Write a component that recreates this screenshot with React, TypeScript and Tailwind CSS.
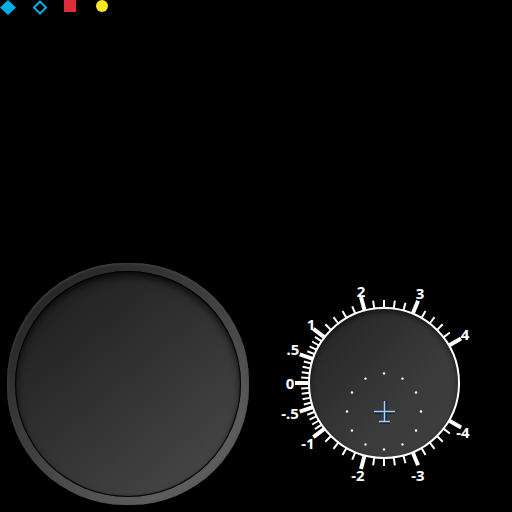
const CX = 128;
const CY = 127;

// Position on the gauge for a rate value; 0 points left and each unit spans 37.5 degrees.
function polar(value: number, radius: number) {
  const a = (value * 37.5 * Math.PI) / 180;
  return { x: CX - radius * Math.cos(a), y: CY - radius * Math.sin(a) };
}

const steps: number[] = [];
for (let i = 0; i <= 10; i++) steps.push(i / 10);
for (let i = 6; i <= 20; i++) steps.push(i / 5);
const values = [...steps, ...steps.filter((v) => v > 0).map((v) => -v)];
const majors = [0, 0.5, 1, 2, 3, 4];

const labels = [
  { text: "0", x: 34, y: 133 },
  { text: ".5", x: 37, y: 99 },
  { text: "1", x: 55, y: 74 },
  { text: "2", x: 105, y: 41 },
  { text: "3", x: 164, y: 43 },
  { text: "4", x: 209, y: 84 },
  { text: "-.5", x: 34, y: 163 },
  { text: "-1", x: 52, y: 193 },
  { text: "-2", x: 102, y: 225 },
  { text: "-3", x: 162, y: 225 },
  { text: "-4", x: 207, y: 182 },
];

function Gauge() {
  return (
    <svg viewBox="0 0 256 256" className="w-full" role="img" aria-label="Vertical speed">
      <defs>
        <linearGradient id="face" x1="0" y1="0" x2="1" y2="1">
          <stop offset="0.1" stopColor="#262626" />
          <stop offset="0.6" stopColor="#3a3a3a" />
          <stop offset="1" stopColor="#404040" />
        </linearGradient>
        <clipPath id="rim">
          <circle cx={CX} cy={CY} r="75" />
        </clipPath>
        <filter id="soft" x="-20%" y="-20%" width="140%" height="140%">
          <feGaussianBlur stdDeviation="3" />
        </filter>
      </defs>
      <circle cx={CX} cy={CY} r="75" fill="url(#face)" />
      <g clipPath="url(#rim)">
        <circle cx={CX} cy={CY + 3} r="79" fill="none" stroke="#000" strokeWidth="8" opacity="0.7" filter="url(#soft)" />
      </g>
      <circle cx={CX} cy={CY} r="75" fill="none" stroke="#fff" strokeWidth="2" />
      {values.map((v) => {
        const major = majors.includes(Math.abs(v));
        const a = polar(v, 75);
        const b = polar(v, major ? 89 : 83);
        return <line key={v} x1={a.x} y1={a.y} x2={b.x} y2={b.y} stroke="#fff" strokeWidth={major ? 4 : 2} />;
      })}
      {labels.map((l) => (
        <text key={l.text} x={l.x} y={l.y} textAnchor="middle" fill="#fff" className="font-['Noto_Sans',sans-serif] text-[15px] font-bold">
          {l.text}
        </text>
      ))}
      {Array.from({ length: 12 }, (_, i) => {
        const a = (i * Math.PI) / 6;
        return <circle key={i} cx={128 + 37 * Math.sin(a)} cy={155.5 - 38 * Math.cos(a)} r="1.2" fill="#fff" />;
      })}
      <path d="M130 145v20M118 157h21M124 167h10" stroke="#10161c" strokeWidth="1" />
      <path d="M128.5 145v21M118 155.5h21M123 165.5h11" stroke="#4a7fb4" strokeWidth="2" />
      <path d="M128.5 145v21M118 155.5h21M123 165.5h11" stroke="#a8d0f4" strokeWidth="1" />
    </svg>
  );
}

export default function App() {
  return (
    <div className="flex min-h-screen flex-col justify-between overflow-hidden bg-black">
      <svg width="112" height="16" viewBox="0 0 112 16" role="img" aria-label="Traffic symbols">
        <path d="M8 0l8 7.5-8 7.5-8-7.5z" fill="#00aee6" />
        <path d="M40 1.5l6 6-6 6-6-6z" fill="none" stroke="#00aee6" strokeWidth="2" />
        <rect x="64" width="12" height="12" fill="#dc2c3e" />
        <circle cx="102" cy="6" r="6" fill="#fbe521" />
      </svg>
      <main className="grid grid-cols-2">
        <div className="px-[7px] pt-[7px]">
          <div className="aspect-square rounded-[118px] bg-linear-140 from-[#272727] from-15% to-[#5c5c5c] to-80% p-2 shadow-[inset_0_1px_3px_#484848]">
            <div className="h-full rounded-full bg-linear-140 from-[#222222] from-15% to-[#444444] to-85% shadow-[inset_0_0_1px_1px_#000,inset_0_5px_9px_#000000c0]" />
          </div>
        </div>
        <Gauge />
      </main>
    </div>
  );
}
